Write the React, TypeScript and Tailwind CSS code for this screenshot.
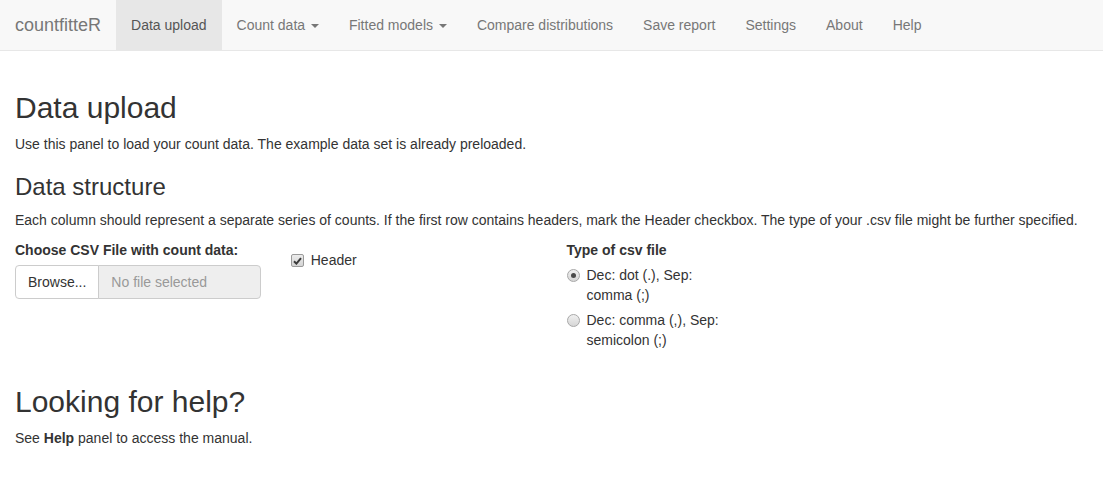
import { ReactNode } from 'react';

const navItems: { label: string; caret?: boolean; active?: boolean }[] = [
  { label: 'Data upload', active: true },
  { label: 'Count data', caret: true },
  { label: 'Fitted models', caret: true },
  { label: 'Compare distributions' },
  { label: 'Save report' },
  { label: 'Settings' },
  { label: 'About' },
  { label: 'Help' },
];

function Caret() {
  return (
    <span className="ml-[2px] inline-block h-0 w-0 align-middle border-t-4 border-x-4 border-t-[#777] border-x-transparent" />
  );
}

function CheckBox() {
  return (
    <span className="absolute -ml-5 mt-[4px] flex h-[13px] w-[13px] items-center justify-center rounded-[2px] border border-[#9a9a9a] bg-gradient-to-b from-[#ececec] to-[#d4d4d4]">
      <svg width="9" height="8" viewBox="0 0 9 8">
        <path d="M1 4.2 L3.4 6.6 L8 1.2" stroke="#3a3a3a" strokeWidth="2" fill="none" />
      </svg>
    </span>
  );
}

function Radio({ checked }: { checked?: boolean }) {
  return (
    <span className="absolute -ml-5 mt-[4px] flex h-[13px] w-[13px] items-center justify-center rounded-full border border-[#a8a8a8] bg-gradient-to-b from-[#f0f0f0] to-[#d6d6d6]">
      {checked && <span className="h-[5px] w-[5px] rounded-full bg-[#4a4a4a]" />}
    </span>
  );
}

function RadioOption({ checked, children }: { checked?: boolean; children: ReactNode }) {
  return (
    <div className="relative block pl-5 leading-5">
      <Radio checked={checked} />
      {children}
    </div>
  );
}

export default function App() {
  return (
    <div className="min-h-[487px] bg-white text-[14px] leading-[20px] text-[#333]" style={{ fontFamily: '"Liberation Sans", Arial, sans-serif' }}>
      <nav className="flex h-[51px] border-b border-[#e7e7e7] bg-[#f8f8f8]">
        <div className="px-[15px] py-[15px] text-[18px] leading-[20px] text-[#777]">countfitteR</div>
        <ul className="flex">
          {navItems.map((item) => (
            <li
              key={item.label}
              className={`block px-[15px] py-[15px] leading-5 ${
                item.active ? 'bg-[#e7e7e7] text-[#555]' : 'text-[#777]'
              }`}
            >
              {item.label}
              {item.caret && (
                <>
                  {' '}
                  <Caret />
                </>
              )}
            </li>
          ))}
        </ul>
      </nav>

      <div className="px-[15px] pt-5">
        <h2 className="mt-5 mb-[10px] text-[30px] leading-[1.1] font-medium">Data upload</h2>
        <p className="mb-5">Use this panel to load your count data. The example data set is already preloaded.</p>

        <h3 className="mb-[10px] text-[24px] leading-[1.1] font-medium">Data structure</h3>
        <p className="mb-[10px]">
          Each column should represent a separate series of counts. If the first row contains headers, mark the Header
          checkbox. The type of your .csv file might be further specified.
        </p>

        <div className="-mx-[15px] flex">
          <div className="w-1/4 px-[15px] pb-[15px]">
            <div className="mb-[5px] font-bold">Choose CSV File with count data:</div>
            <div className="flex h-[34px]">
              <div className="flex items-center rounded-l-[4px] border border-[#ccc] bg-white px-3 text-[#333]">Browse...</div>
              <div className="-ml-px flex flex-1 items-center rounded-r-[4px] border border-[#ccc] bg-[#eee] px-3 text-[#999]">
                No file selected
              </div>
            </div>
          </div>

          <div className="w-1/4 px-[15px]">
            <div className="relative my-[10px] pl-5">
              <CheckBox />
              Header
            </div>
          </div>

          <div className="w-1/6 px-[15px] pb-[15px]">
            <div className="mb-[5px] font-bold">Type of csv file</div>
            <div className="flex flex-col gap-[5px]">
              <RadioOption checked>Dec: dot (.), Sep: comma (;)</RadioOption>
              <RadioOption>Dec: comma (,), Sep: semicolon (;)</RadioOption>
            </div>
          </div>
        </div>

        <h2 className="mt-5 mb-[10px] text-[30px] leading-[1.1] font-medium">Looking for help?</h2>
        <p>
          See <b>Help</b> panel to access the manual.
        </p>
      </div>
    </div>
  );
}
